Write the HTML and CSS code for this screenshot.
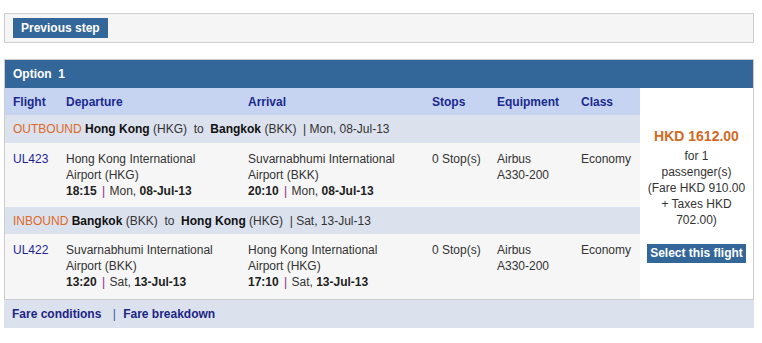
FILE: index.html
```html
<!DOCTYPE html>
<html>
<head>
<meta charset="utf-8">
<link rel="stylesheet" href="styles.css">
</head>
<body>
<div class="page">
  <div class="stepbar">
    <span class="btn">Previous step</span>
  </div>

  <div class="option">
    <div class="option-head">Option&nbsp;&nbsp;1</div>
    <table class="flights">
      <colgroup>
        <col class="c-flight"><col class="c-dep"><col class="c-arr"><col class="c-stops"><col class="c-eq"><col class="c-class"><col class="c-price">
      </colgroup>
      <tr class="colhead">
        <th>Flight</th><th>Departure</th><th>Arrival</th><th>Stops</th><th>Equipment</th><th>Class</th>
        <td class="price" rowspan="5">
          <div class="amount">HKD 1612.00</div>
          <div class="fare">for 1<br>passenger(s)<br>(Fare HKD 910.00<br>+ Taxes HKD<br>702.00)</div>
          <span class="btn btn-select">Select this flight</span>
        </td>
      </tr>
      <tr class="segment seg-out">
        <td colspan="6"><span class="dir">OUTBOUND</span> <b>Hong Kong</b> (HKG)&nbsp; to&nbsp; <b>Bangkok</b> (BKK)&nbsp; | Mon, 08-Jul-13</td>
      </tr>
      <tr class="leg leg-out">
        <td class="fno">UL423</td>
        <td>Hong Kong International<br>Airport (HKG)<br><b>18:15</b> <span class="sep">|</span> Mon, <b>08-Jul-13</b></td>
        <td>Suvarnabhumi International<br>Airport (BKK)<br><b>20:10</b> <span class="sep">|</span> Mon, <b>08-Jul-13</b></td>
        <td>0 Stop(s)</td>
        <td>Airbus<br>A330-200</td>
        <td>Economy</td>
      </tr>
      <tr class="segment seg-in">
        <td colspan="6"><span class="dir">INBOUND</span> <b>Bangkok</b> (BKK)&nbsp; to&nbsp; <b>Hong Kong</b> (HKG)&nbsp; | Sat, 13-Jul-13</td>
      </tr>
      <tr class="leg leg-in">
        <td class="fno">UL422</td>
        <td>Suvarnabhumi International<br>Airport (BKK)<br><b>13:20</b> <span class="sep">|</span> Sat, <b>13-Jul-13</b></td>
        <td>Hong Kong International<br>Airport (HKG)<br><b>17:10</b> <span class="sep">|</span> Sat, <b>13-Jul-13</b></td>
        <td>0 Stop(s)</td>
        <td>Airbus<br>A330-200</td>
        <td>Economy</td>
      </tr>
    </table>
  </div>

  <div class="links">
    <a class="link">Fare conditions</a>
    <span class="pipe">|</span>
    <a class="link">Fare breakdown</a>
  </div>
</div>
</body>
</html>
```

FILE: styles.css
```css
html, body {
  margin: 0;
  padding: 0;
  background: #ffffff;
}
body {
  font-family: "Liberation Sans", Arial, sans-serif;
  font-size: 12px;
  line-height: 16px;
  color: #333333;
}
.page {
  width: 750px;
  padding: 13px 0 0 4px;
}
.stepbar {
  border: 1px solid #cccccc;
  background: #f5f5f5;
  padding: 4px 8px 4px 8px;
  height: 20px;
}
.btn {
  display: inline-block;
  background: #336699;
  color: #ffffff;
  font-weight: bold;
  line-height: 20px;
  height: 20px;
  padding: 0 8px;
}
.option {
  margin-top: 16px;
  border: 1px solid #cccccc;
}
.option-head {
  background: #336699;
  color: #ffffff;
  font-weight: bold;
  height: 28px;
  line-height: 28px;
  padding-left: 8px;
}
.flights {
  width: 748px;
  border-collapse: collapse;
  border-spacing: 0;
  table-layout: fixed;
}
.c-flight { width: 53px; }
.c-dep { width: 182px; }
.c-arr { width: 184px; }
.c-stops { width: 65px; }
.c-eq { width: 84px; }
.c-class { width: 67px; }
.c-price { width: 113px; }
.flights th, .flights td {
  padding: 0 0 0 8px;
  text-align: left;
  vertical-align: middle;
}
.colhead th {
  background: #c6d4f2;
  color: #1a2a8e;
  font-weight: bold;
  height: 27px;
}
.segment td {
  background: #dbe1ed;
  color: #333333;
  white-space: nowrap;
}
.seg-out td { height: 28px; }
.seg-in td { height: 27px; }
.segment b { color: #111111; }
.dir {
  color: #dd6a26;
}
.leg td {
  background: #f6f6f6;
  vertical-align: top;
  padding-top: 8px;
}
.leg-out td { height: 56px; }
.leg-in td { height: 57px; }
.leg b { color: #222222; }
.fno {
  color: #1f1f9a;
}
.sep {
  color: #8a2a8a;
  padding: 0 1px 0 2px;
}
.flights td.price {
  background: #ffffff;
  text-align: center;
  vertical-align: middle;
  padding: 0 4px;
}
.amount {
  color: #d2691e;
  font-size: 14px;
  font-weight: bold;
  line-height: 16px;
  margin: 4px 0 4px;
}
.fare {
  color: #333333;
  white-space: nowrap;
}
.btn-select {
  margin-top: 16px;
  height: 19px;
  line-height: 19px;
  padding: 0 3px;
}
.links {
  background: #dbe1ed;
  height: 28px;
  line-height: 28px;
  padding-left: 8px;
  font-weight: bold;
  color: #1d2587;
}
.link {
  color: #1d2587;
  text-decoration: none;
}
.pipe {
  color: #3a5aa0;
  font-weight: normal;
  padding: 0 4px 0 8px;
}
```
